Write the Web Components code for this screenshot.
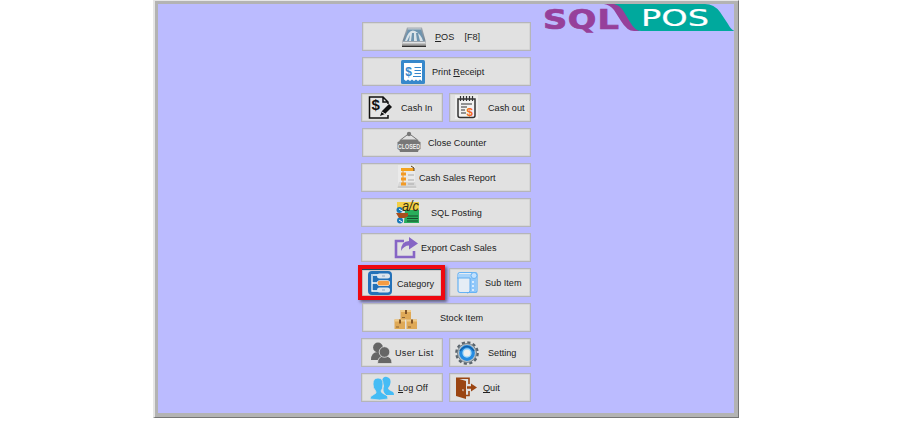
<!DOCTYPE html>
<html lang="en"><head><meta charset="utf-8"><title>SQL POS</title>
<style>body{margin:0;background:#fff;font-family:"Liberation Sans",Arial,sans-serif;width:903px;height:445px;overflow:hidden}u{text-underline-offset:1px;text-decoration-thickness:1px}.inset{margin-left:1px}</style></head><body>
<pos-window>
<pos-logo slot="logo"></pos-logo>
<pos-menu>
<pos-button class="wide inset" icon="register" style="--i:39px;--t:72px"><u>P</u>OS&nbsp;&nbsp;&nbsp;&nbsp;[F8]</pos-button>
<pos-button class="wide inset" icon="receipt" style="--i:38px;--t:69px">Print <u>R</u>eceipt</pos-button>
<pos-button icon="cashin" style="--i:6px;--t:39.5px">Cash In</pos-button>
<pos-button icon="cashout" style="--i:5px;--t:38.5px">Cash out</pos-button>
<pos-button class="wide inset" icon="closed" style="--i:34px;--t:65px">Close Counter</pos-button>
<pos-button class="wide" icon="report" style="--i:34px;--t:57px">Cash Sales Report</pos-button>
<pos-button class="wide" icon="posting" style="--i:33.5px;--t:69px">SQL Posting</pos-button>
<pos-button class="wide" icon="export" style="--i:32px;--t:59px">Export Cash Sales</pos-button>
<pos-button icon="category" selected style="--i:6px;--t:35px">Category</pos-button>
<pos-button icon="subitem" style="--i:6px;--t:35.5px">Sub Item</pos-button>
<pos-button class="wide inset" icon="stock" style="--i:31px;--t:77px">Stock Item</pos-button>
<pos-button icon="users" style="--i:8.5px;--t:33.5px;--s:.3px">User List</pos-button>
<pos-button icon="setting" style="--i:5px;--t:38.5px">Setting</pos-button>
<pos-button icon="logoff" style="--i:7.5px;--t:36.5px"><u>L</u>og Off</pos-button>
<pos-button icon="quit" style="--i:5px;--t:34px"><u>Q</u>uit</pos-button>
</pos-menu>
</pos-window>
<script>
const icons={
register:`<defs><linearGradient id="g" x2="0" y2="1"><stop stop-color="#a4acb4"/><stop offset=".65" stop-color="#758391"/><stop offset=".8" stop-color="#ccc"/><stop offset="1" stop-color="#555"/></linearGradient></defs><path d="M5 2.5h15l4 15V22H0v-4.5z" fill="url(#g)"/><path d="M6 4h13l3 12H2z" fill="#6e94af"/><path d="M3 16Q7 3 13 6t8 10h-3L16 8h-2l1 8h-3V8h-2l-1 8H7l1-6-3 6z" fill="#dae3e9"/><path d="M1 17.5h22" stroke="#dfe3e6"/><path d="M0 21.5h24" stroke="#333"/><path d="M6 4h13" stroke="#c8d0d6"/>`,
receipt:`<rect x="0" y="0" width="24" height="24" rx="1.5" fill="#3788cb"/><path d="M3 3h18v18l-2-1.5-2 1.5-2-1.5-2 1.5-2-1.5L9 21l-2-1.5L5 21l-2-1.5z" fill="#fff"/><text x="4.2" y="15.8" font-size="12" font-weight="bold" fill="#3788cb">$</text><path d="M13.5 7.5H20M13.5 10.5H20M13.5 13.5H20M12 16.5h8" stroke="#3788cb" stroke-width="1.2"/>`,
cashin:`<path d="M20 9V7l-5-5H1.5v21H20v-3M15 2v5h5" fill="#e6e6e6" stroke="#111" stroke-width="1.5"/><text x="3.5" y="15" font-size="15" font-weight="bold" fill="#111">$</text><path d="m12 21 2-5 7-7 3 3-7 7z" fill="#111"/><path d="m14 17 3 2" stroke="#eee"/>`,
cashout:`<path d="M0 0h23v24H0z" fill="#eee"/><path d="M3 4v16.5q0 2 2 2h13q2 0 2-2V4z" fill="#f2f2f2" stroke="#333" stroke-width="1.5"/><path d="M5.5 1v5M8.5 1v5M11.5 1v5M14.5 1v5M17.5 1v5" stroke="#333" stroke-width="1.2"/><path d="M6 9h11M6 12h6M6 15h4M6 18h5" stroke="#333" stroke-width="1.2"/><text x="11.5" y="20.5" font-size="11.5" font-weight="bold" fill="#f36a22">$</text>`,
closed:`<path d="m4 9.5 8-6 8 6" fill="none" stroke="#777" stroke-width="1"/><circle cx="12" cy="4" r="2.2" fill="#777"/><path d="M3 9.500h18q0 2 2.500 2.500v7q-2.500.500-2.500 3H3q0-2.500-2.500-3v-7Q3 11.500 3 9.500z" fill="#777"/><text x=".8" y="18.500" font-size="6.500" font-weight="bold" textLength="22.400" lengthAdjust="spacingAndGlyphs" fill="#eee">CLOSED</text>`,
report:`<path d="M2 0h17v18l2 6H1l1-6z" fill="#eaeaea"/><path d="m3 17-2 6h20l-2-6z" fill="#d8d8d8"/><path d="M5 4.500h13" stroke="#f5a31e" stroke-width="3"/><path d="m15 1 3 2v3" fill="none" stroke="#563a1c"/><path d="M7 6v12" stroke="#f29a26"/><path d="M5 9h5M5 14h5M5 19h5" stroke="#f29a26" stroke-width="3"/><path d="M12 10h6M12 15h6M12 19h6" stroke="#aaa"/><path d="M2 22h18" stroke="#bbb"/>`,
posting:`<path d="M1 2h22v8H1z" fill="#f3cf45"/><path d="M9 10h14v13H8z" fill="#28ad5b"/><path d="M11 16h11M11 18.500h11M11 21h11" stroke="#174c2b" stroke-width="1.200"/><text x="6" y="10.500" font-size="14" font-style="italic" fill="#302b14" textLength="17" lengthAdjust="spacingAndGlyphs">a/c</text><circle cx="3.500" cy="10" r="3" fill="#1678b8"/><circle cx="4" cy="20.500" r="3" fill="#1678b8"/><path d="M0 13h12v3l-3 2H3z" fill="#a84e1c"/><path d="m3 9 3 2M3 20l3 2" stroke="#fff"/>`,
export:`<path d="M10 6H2v16h18v-6" fill="none" stroke="#8665c5" stroke-width="2.600"/><path d="M7 16Q7 6 15 6V2l9 6.500-9 6v-4q-5 0-8 5.500z" fill="#8665c5"/>`,
category:`<rect x="0" y="0" width="24" height="24" rx="4" fill="#2471b8"/><path d="M4 3v17h7M4 12h7M5 4h7" fill="none" stroke="#fff" stroke-width="1.300"/><rect x="9" y="2.500" width="13" height="5" rx="2.500" fill="#dce5ee"/><rect x="9" y="9.300" width="13" height="5.600" rx="2.800" fill="#fff"/><rect x="9.500" y="9.800" width="12" height="4.600" rx="2.300" fill="#f49b42"/><rect x="9" y="16.500" width="13" height="5" rx="2.500" fill="#dce5ee"/><path d="M14 5h3M14 19h3" stroke="#8ba6c2"/>`,
subitem:`<rect x="2" y="1.500" width="19" height="20" rx="2" fill="#e5edf5" stroke="#66b2f4" stroke-width="1.200"/><path d="M2 3h17v4H2z" fill="#a7d3fa"/><path d="M14 7h6v14h-6z" fill="#8fc7fa"/><path d="M1 7h13v13q-1 2-3 2" fill="none" stroke="#61adf0"/><circle cx="18" cy="4.500" r="3" fill="#c3e2ff" stroke="#69b2f2"/><circle cx="17" cy="11" r="1" fill="#eef7ff"/><circle cx="17" cy="15" r="1" fill="#eef7ff"/><circle cx="17" cy="19" r="1" fill="#eef7ff"/>`,
stock:`<g id="b"><path d="M.5 13.500h10.500V23H.5z" fill="#dfa957"/><path d="M.5 13.500H11v2H.5z" fill="#f0ca86"/><path d="M5 13.500h2v4H5z" fill="#805428"/><path d="M2 21h3" stroke="#8b6435"/></g><use href="#b" x="12"/><use href="#b" x="6" y="-9.500"/>`,
users:`<g fill="#666"><circle cx="7" cy="6.500" r="4.900"/><path d="M0 19q0-8 7-8t7 8z"/><g stroke="#e1e1e1" stroke-width=".8"><path d="M6.500 22.500q0-7.500 7.300-7.500t7.200 7.500z"/><circle cx="13.500" cy="11" r="5.300"/></g></g>`,
setting:`<circle cx="12" cy="12" r="10.200" fill="none" stroke="#59636b" stroke-width="3.200" stroke-dasharray="3 2.340"/><circle cx="12" cy="12" r="9.500" fill="#b9c1c6" stroke="#77838b"/><circle cx="12" cy="12" r="7.900" fill="#258ce2"/><path d="M5 10q7-9 14 0" fill="none" stroke="#1261a8" stroke-width="1.500"/><circle cx="12" cy="12" r="4" fill="#eee" stroke="#a4dafa" stroke-width="1.300"/>`,
logoff:`<g fill="#45bcf5"><path d="M12 5q1-5 5-4 5 1 3 8-1 2-2 3 0 2 5 4 1 1 1 3h-8q-4-4-2-9z"/><path d="M3 8q0-6 5-6t5 6q0 5-2 7 0 2 5 4 2 1 2 4-8 2-18 0 0-3 3-4l3-2q0-2-1-3-2-2-2-6z" stroke="#e1e1e1" stroke-width=".8"/></g>`,
quit:`<path d="m1 2 10 3v18L1 20z" fill="#9b4512"/><path d="M1 2.300h13V8M11 19.500h3V15" fill="none" stroke="#9b4512" stroke-width="1.600"/><path d="M12 10.200h4V7.500l6 4-6 4v-2.700h-4z" fill="#9b4512"/><path d="m7.500 13 1 .3v2l-1-.3" fill="#eee"/>`};
function define(name,make){customElements.define(name,class extends HTMLElement{connectedCallback(){if(!this.shadowRoot)this.attachShadow({mode:'open'}).innerHTML=make(this)}})}
define('pos-window',()=>`<style>:host{display:block;position:relative;box-sizing:border-box;width:586px;height:418px;margin-left:153px;border-style:solid;border-width:1px 1px 1px 2px;border-color:#e6e6e6 #757575 #757575 #e6e6e6;background:#b3b3b3}.c{box-sizing:border-box;margin:3px 4px 4px 3px;height:409px;background:#bbf;padding:18.4px 0 0 203.3px}::slotted(pos-logo){position:absolute;left:384px;top:3px}</style><slot name="logo"></slot><div class="c"><slot></slot></div>`);
define('pos-menu',()=>`<style>:host{display:grid;grid-template-columns:82px 82px;column-gap:5.6px;row-gap:6.1px;grid-auto-rows:29px}::slotted(.wide){grid-column:1/-1}</style><slot></slot>`);
define('pos-button',e=>`<style>:host{display:flex;position:relative;box-sizing:border-box;border:1px solid #b5b5b9;background:#e1e1e1;align-items:center;color:#222;font-size:9.6px;letter-spacing:var(--s,0);white-space:pre;box-shadow:inset 0 0 0 .5px #ccc}svg{flex:none;width:24px;height:24px;margin-left:var(--i);overflow:visible;letter-spacing:0}.t{display:block;margin-left:calc(var(--t) - var(--i) - 24.5px);transform:scaleX(.95);transform-origin:0 50%}:host([selected]){border-color:#286482;border-top:2px solid #0b5270;box-shadow:inset 0 0 0 1px #ccc}.ring{position:absolute;inset:-5px -3px -4px -4px;border:4px solid #ee0810;box-shadow:2px 2px 3px #333a,inset 0 0 1px #700}</style><svg viewBox="0 0 24 24">${icons[e.getAttribute('icon')]}</svg><span class="t"><slot></slot></span>${e.hasAttribute('selected')?'<i class="ring"></i>':''}`);
define('pos-logo',()=>`<style>:host{display:block;width:195px;height:36px}svg{display:block}</style><svg width="195" height="36" viewBox="538 4 195 36"><path d="M603 4h16l20 27h-6q-7 0-13-10l-7-11q-4-5-10-6z" fill="#96409a"/><path d="M613 4h91q9 0 15 8l8 12q3 6 7 7H640q-6 0-11-9l-6-10q-4-7-10-8z" fill="#00a99d"/><text transform="translate(542 29.2) scale(1.27 1)" x="0 19.400 43" font-family="DejaVu Sans" font-size="26.500" font-weight="bold" fill="#96409a" stroke="#96409a" stroke-width=".7">SQL</text><text x="640" y="26.200" font-family="DejaVu Sans" font-size="23" textLength="68" lengthAdjust="spacingAndGlyphs" fill="#fff" stroke="#fff" stroke-width=".2">POS</text></svg>`);
</script></body></html>
